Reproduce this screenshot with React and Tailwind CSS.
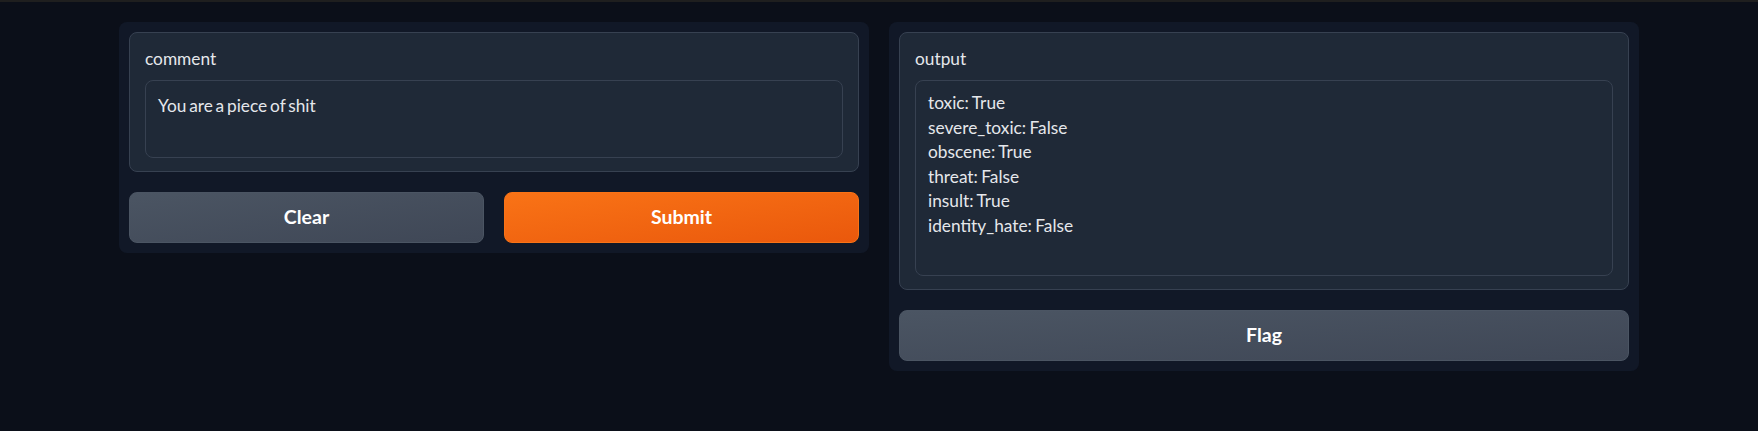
export default function App() {
  const lines = [
    "toxic: True",
    "severe_toxic: False",
    "obscene: True",
    "threat: False",
    "insult: True",
    "identity_hate: False",
  ];
  return (
    <div className="min-h-[431px] bg-[#0b0f19] font-['Lato',sans-serif] text-[17.3px] leading-[24.6px] text-[#e5e7eb] [word-spacing:-1px]">
      <div className="h-[2px] bg-[#1f1f1f]" />
      <div className="mx-auto flex w-[1520px] items-start gap-5 pt-5">
        {/* left panel */}
        <div className="flex w-[750px] flex-col gap-5 rounded-lg bg-[#111827] p-[10px]">
          <div className="rounded-lg border border-[#374151] bg-[#1f2937] px-[15px] pt-[14px] pb-[13px]">
            <div className="mb-2 h-[25px]">comment</div>
            <div className="h-[78px] rounded-lg border border-[#374151] bg-[#1f2937] px-3 pt-[13px] [word-spacing:-1.6px]">
              You are a piece of shit
            </div>
          </div>
          <div className="grid grid-cols-2 gap-5">
            <button className="h-[51px] rounded-lg border border-[#4b5563] bg-gradient-to-br from-[#4b5563] to-[#3f4756] text-[19.5px] font-bold text-white">
              Clear
            </button>
            <button className="h-[51px] rounded-lg border border-[#f97316] bg-gradient-to-br from-[#f97316] to-[#ea580c] text-[19.5px] font-bold text-white">
              Submit
            </button>
          </div>
        </div>
        {/* right panel */}
        <div className="flex w-[750px] flex-col gap-5 rounded-lg bg-[#111827] p-[10px]">
          <div className="rounded-lg border border-[#374151] bg-[#1f2937] px-[15px] pt-[14px] pb-[13px]">
            <div className="mb-2 h-[25px]">output</div>
            <div className="h-[196px] rounded-lg border border-[#374151] bg-[#1f2937] px-3 pt-[10px]">
              {lines.map((l) => (
                <div key={l}>{l}</div>
              ))}
            </div>
          </div>
          <button className="h-[51px] rounded-lg border border-[#4b5563] bg-gradient-to-br from-[#4b5563] to-[#3f4756] text-[19.5px] font-bold text-white">
            Flag
          </button>
        </div>
      </div>
    </div>
  );
}
